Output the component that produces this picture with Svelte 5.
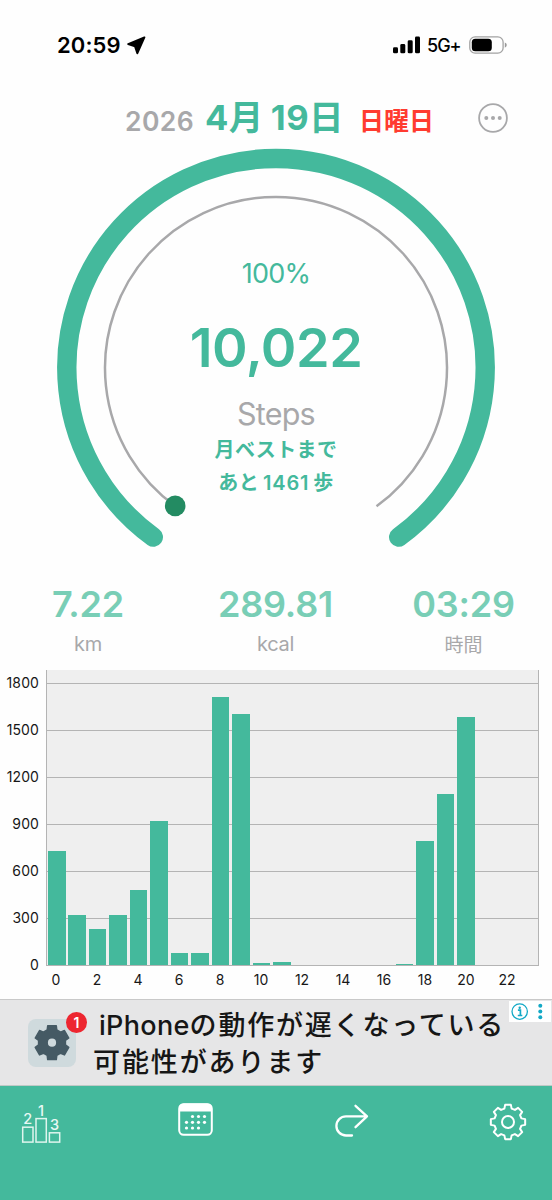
<script>
  const steps = [726, 321, 228, 322, 476, 919, 77, 77, 1713, 1605, 15, 20, 0, 0, 0, 0, 0, 9, 794, 1092, 1583, 0, 0, 0];
  const ticks = [1800, 1500, 1200, 900, 600, 300, 0];
  const hours = [0, 2, 4, 6, 8, 10, 12, 14, 16, 18, 20, 22];
  const scale = 47 / 300;
  const gearPath = (cx, cy, teeth, outer, inner, tip, root) => {
    const pts = [];
    for (let i = 0; i < teeth; i++) {
      const a = (i * 2 * Math.PI) / teeth - Math.PI / 2;
      for (const [d, r] of [[-root, inner], [-tip, outer], [tip, outer], [root, inner]]) {
        pts.push(`${(cx + r * Math.cos(a + d)).toFixed(2)} ${(cy + r * Math.sin(a + d)).toFixed(2)}`);
      }
    }
    return `M${pts.join('L')}Z`;
  };
  const dots = [[14.5, 13.5], [20.5, 13.5], [26.5, 13.5], [8.5, 19.3], [14.5, 19.3], [20.5, 19.3], [26.5, 19.3], [8.5, 25], [14.5, 25], [20.5, 25]];
</script>

<div class="screen">
  <header class="status">
    <span class="clock">20:59</span>
    <svg class="loc" width="19" height="19" viewBox="0 0 19 19"><path d="M17.4 1.4 1.2 8.1 8 10.4 10.3 17.3z" stroke="#000" stroke-width="1.9" stroke-linejoin="round" /></svg>
    <svg class="signal" width="28" height="18" viewBox="0 0 28 18"><rect x="0" y="11.3" width="5" height="6" rx="1.4" /><rect x="7.3" y="8" width="5" height="9.3" rx="1.4" /><rect x="14.7" y="4.3" width="5" height="13" rx="1.4" /><rect x="22" y="0.5" width="5" height="16.8" rx="1.4" /></svg>
    <span class="net">5G+</span>
    <svg class="battery" width="39" height="18" viewBox="0 0 39 18"><rect x="0.8" y="0.8" width="33.3" height="16.4" rx="5.3" fill="none" stroke="#a2a2a2" stroke-width="1.3" /><rect x="2.8" y="2.8" width="20" height="12.4" rx="3.5" /><path d="M35.8 6.5q2 .8 2 2.6t-2 2.6z" fill="#999" /></svg>
  </header>

  <div class="date">
    <span class="year">2026</span>
    <span class="day">4月<i></i>19日</span>
    <span class="week">日曜日</span>
    <svg class="more" width="32" height="32" viewBox="0 0 32 32"><circle cx="16" cy="16" r="13.9" fill="none" stroke="#a8a8aa" stroke-width="1.8" /><circle cx="9.3" cy="16" r="2" /><circle cx="16" cy="16" r="2" /><circle cx="22.7" cy="16" r="2" /></svg>
  </div>

  <section class="gauge">
    <svg width="552" height="424" viewBox="0 140 552 424" fill="none">
      <path d="M153.3 537.1A209.2 209.2 0 1 1 398.7 537.1" stroke="#44b99c" stroke-width="19.4" stroke-linecap="round" />
      <path d="M175.5 506.3A171 171 0 1 1 376.5 506.3" stroke="#a8a8aa" stroke-width="2.5" />
      <circle cx="175.2" cy="505.9" r="10.3" fill="#238b62" />
    </svg>
    <div class="readout">
      <span class="percent">100%</span>
      <strong>10,022</strong>
      <span class="unit">Steps</span>
      <span class="best">月ベストまで</span>
      <span class="best rest">あと<b>1461</b>歩</span>
    </div>
  </section>

  <section class="stats">
    <div><strong>7.22</strong><span>km</span></div>
    <div><strong>289.81</strong><span>kcal</span></div>
    <div><strong>03:29</strong><span class="time">時間</span></div>
  </section>

  <section class="chart">
    <div class="ylabels">{#each ticks as t}<span>{t}</span>{/each}</div>
    <div class="main">
      <div class="plot">
        <div class="grid">{#each ticks as t}<i></i>{/each}</div>
        <div class="bars">{#each steps as s}<i style="height:{s * scale}px"></i>{/each}</div>
      </div>
      <div class="xlabels">{#each hours as h}<span>{h}</span>{/each}</div>
    </div>
  </section>

  <section class="ad">
    <div class="appicon">
      <svg width="50" height="50" viewBox="0 0 50 50"><rect x="1" y="1" width="48" height="48" rx="8" fill="#cfdadd" /><path d={gearPath(25, 24.7, 6, 17.4, 13.6, 0.25, 0.36)} fill="#455a64" stroke="#455a64" stroke-width="1.5" stroke-linejoin="round" /><circle cx="25" cy="24.7" r="4.1" fill="#cfdadd" /></svg>
      <span class="badge">1</span>
    </div>
    <div class="copy"><p>iPhone<em>の動作が遅くなっている</em></p><p class="second">可能性があります</p></div>
    <svg class="choices" width="42" height="21" viewBox="0 0 42 21"><rect width="42" height="21" fill="#fff" /><circle cx="10.7" cy="10.6" r="7.7" fill="none" stroke="#13a9c6" stroke-width="1.3" /><circle cx="10.7" cy="6.7" r="1.2" fill="#13a9c6" /><path d="M8.9 9.2h2.5v5.3m-2.6 0h4.5" fill="none" stroke="#13a9c6" stroke-width="1.7" /><g fill="#13a9c6"><circle cx="31.3" cy="4.8" r="2" /><circle cx="31.3" cy="10.5" r="2" /><circle cx="31.3" cy="16.2" r="2" /></g></svg>
  </section>

  <nav>
    <svg class="podium" width="46" height="52" viewBox="0 -8 46 52"><g fill="none" stroke="#dff5ee" stroke-width="1.5"><rect x="1.7" y="23.2" width="10.3" height="14.9" /><rect x="15" y="14.6" width="10.3" height="23.5" /><rect x="28.4" y="28.8" width="10.3" height="9.3" /></g><g fill="#e8f8f3" font-family="Inter, sans-serif" font-size="14.5" font-weight="500" text-anchor="middle"><text x="6.7" y="20.3">2</text><text x="20" y="11.5">1</text><text x="33.5" y="25.8">3</text></g></svg>
    <svg class="calendar" width="36" height="34" viewBox="0 0 36 34"><rect x="1.2" y="1.2" width="32.6" height="30.6" rx="4.5" fill="none" stroke="#fff" stroke-width="2" /><path d="M1 8.5V5q0-4.5 4.5-4.5h24q4.5 0 4.5 4.5v3.5z" fill="#fff" /><g fill="#fff">{#each dots as [x, y]}<circle cx={x} cy={y} r="1.6" />{/each}</g></svg>
    <svg class="redo" width="36" height="36" viewBox="0 0 36 36" fill="none" stroke="#fff" stroke-width="2.3" stroke-linecap="round" stroke-linejoin="round"><path d="M18 32.5H12A9.6 9.6 0 0 1 12 13.3H33M21.5 2.8 33 13.3 21.5 24.2" /></svg>
    <svg class="settings" width="38" height="38" viewBox="0 0 38 38" fill="none" stroke="#fff" stroke-width="2" stroke-linejoin="round"><path d={gearPath(19, 19, 8, 17.4, 13.9, 0.165, 0.265)} /><circle cx="19" cy="19" r="6" /></svg>
  </nav>
</div>

<style>
  :global(body) { margin: 0; background: #fefefe; }
  .screen { width: 552px; height: 1200px; display: flex; flex-direction: column; font-family: Inter, "Noto Sans CJK JP", sans-serif; background: #fefefe; overflow: hidden; white-space: nowrap; }
  .status { height: 90px; box-sizing: border-box; padding-left: 57px; display: flex; align-items: center; }
  .clock { width: 70px; font-size: 22px; font-weight: 600; letter-spacing: 0.1px; }
  .signal { margin-left: 247px; }
  .net { width: 41px; margin-left: 6px; margin-right: 1px; font-size: 18px; font-weight: 500; letter-spacing: -1px; }
  .status, .more { flex: none; }
  .date { height: 50px; display: flex; align-items: center; padding-left: 125px; }
  .year, .day, .week { line-height: 50px; }
  .year { width: 80px; font-size: 26.5px; font-weight: 600; color: #a8a8aa; padding-top: 6px; box-sizing: border-box; height: 50px; letter-spacing: 0.4px; }
  .day { width: 154px; font-size: 34.5px; font-weight: 700; color: #44b99c; height: 50px; padding-top: 3px; box-sizing: border-box; letter-spacing: 0.5px; }
  .day i { display: inline-block; width: 7px; }
  .week { width: 118px; font-size: 25px; font-weight: 700; color: #ff3b30; height: 50px; padding-top: 6px; box-sizing: border-box; }
  .more { fill: #a8a8aa; margin-top: 6px; }
  .gauge { display: grid; height: 424px; }
  .gauge > * { grid-area: 1 / 1; }
  .readout { display: flex; flex-direction: column; align-items: center; padding-top: 114px; color: #44b99c; }
  .percent { font-size: 27px; line-height: 40px; font-weight: 400; letter-spacing: -0.8px; }
  .readout strong { font-size: 54px; line-height: 66px; margin-top: 21px; font-weight: 600; letter-spacing: -0.5px; }
  .unit { font-size: 30.5px; font-weight: 400; line-height: 40px; color: #a8a8aa; margin-top: 13px; letter-spacing: -0.8px; }
  .best { font-size: 20px; line-height: 32px; font-weight: 600; letter-spacing: 0.4px; }
  .best.rest { line-height: 34px; }
  .best b { font-weight: 600; margin: 0 4px; letter-spacing: 0.8px; }
  .stats { height: 106px; display: grid; grid-template-columns: 176px 199px 177px; }
  .stats div { display: flex; flex-direction: column; align-items: center; padding-top: 17px; }
  .stats strong { font-size: 36px; line-height: 46px; font-weight: 600; color: #79ceb6; letter-spacing: -0.2px; }
  .stats span { font-size: 20px; line-height: 30px; margin-top: 2px; font-weight: 400; color: #a8a8aa; letter-spacing: -0.3px; }
  .stats span.time { font-size: 19px; letter-spacing: 0; margin-top: 4px; }
  .chart { height: 329px; display: flex; }
  .ylabels { width: 46px; box-sizing: border-box; padding-right: 7px; display: flex; flex-direction: column; align-items: flex-end; }
  .ylabels span { height: 47px; line-height: 25px; font-size: 14px; letter-spacing: 0.1px; }
  .ylabels span, .xlabels span { color: #171717; flex: none; }
  .main { width: 493px; }
  .plot { box-sizing: border-box; height: 296px; background: #efefef; border: 1px solid #b4b4b4; border-top: 0; display: grid; }
  .grid, .bars { grid-area: 1 / 1; }
  .grid { padding-top: 13px; height: 282px; }
  .grid i { display: block; height: 47px; box-sizing: border-box; border-top: 1px solid #b4b4b4; }
  .grid i:last-child { height: 0; border: 0; }
  .bars { display: grid; grid-template-columns: repeat(24, 20.48px); align-items: end; z-index: 1; }
  .bars i { width: 17.5px; margin-left: 1px; background: #44b99c; }
  .xlabels { display: flex; }
  .xlabels span { width: 41px; box-sizing: border-box; padding-right: 21px; display: flex; justify-content: center; font-size: 14px; line-height: 28px; }
  .ad { height: 87px; box-sizing: border-box; border-top: 1px solid #c9c9c9; border-bottom: 1px solid #bfc9c6; background: #e6e6e7; display: flex; position: relative; }
  .appicon { position: relative; margin: 18px 0 0 27px; width: 66px; height: 50px; }
  .badge { position: absolute; left: 39px; top: -6px; width: 21px; height: 21px; border-radius: 50%; background: #ed2630; color: #fff; font-size: 14px; line-height: 21px; text-align: center; font-weight: 600; }
  .copy { color: #161616; padding-top: 7px; font-size: 27px; font-weight: 500; }
  .copy p { margin: 0; line-height: 37px; padding-left: 6px; letter-spacing: 0.3px; }
  .copy em { font-style: normal; letter-spacing: 1.8px; }
  .copy p.second { padding-left: 0; letter-spacing: 1.9px; }
  .choices { position: absolute; right: 1px; top: 1px; }
  nav { height: 114px; background: #44b99c; display: flex; box-sizing: border-box; padding: 10px 0 0 21px; }
  nav svg { flex: none; margin-top: 7px; }
  nav .podium { margin-top: 0; }
  nav .calendar { margin-left: 111px; }
  nav .redo { margin-left: 120px; }
  nav .settings { margin-left: 119px; }
</style>
